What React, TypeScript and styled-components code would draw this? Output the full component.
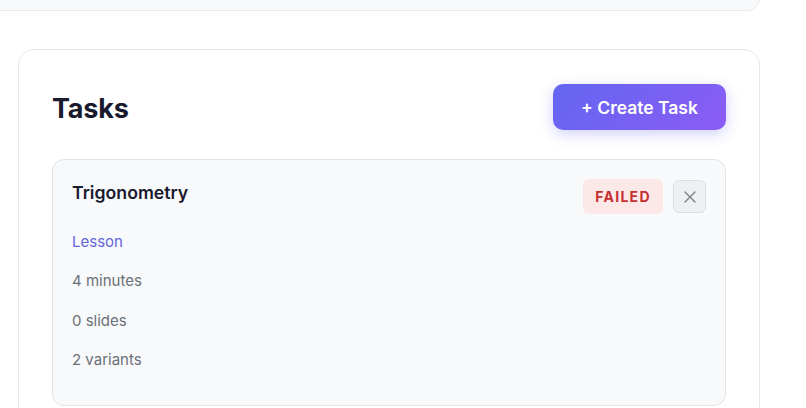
import React from "react";
import styled, { createGlobalStyle } from "styled-components";

const Global = createGlobalStyle`
  html, body { margin: 0; padding: 0; background: #ffffff; overflow: hidden; }
  body { font-family: Inter, "Noto Sans", sans-serif; -webkit-font-smoothing: antialiased; }
  * { box-sizing: border-box; }
`;

const Page = styled.div`
  display: flex;
  flex-direction: column;
  width: 742px;
  margin-left: 18px;
`;

const PrevCard = styled.div`
  height: 51px;
  margin-top: -40px;
  margin-left: -60px;
  background: #f8f9fb;
  border: 1px solid #e8e9ec;
  border-radius: 12px;
`;

const Card = styled.section`
  margin-top: 38px;
  background: #ffffff;
  border: 1px solid #e6e7ea;
  border-radius: 16px;
  padding: 34px 33px 40px 33px;
`;

const Header = styled.div`
  display: flex;
  align-items: center;
  justify-content: space-between;
  margin-bottom: 29px;
`;

const Title = styled.h2`
  margin: 0;
  font-size: 27px;
  font-weight: 700;
  color: #1a1a2e;
  letter-spacing: -0.2px;
  padding-top: 2px;
`;

const PrimaryButton = styled.button`
  height: 46px;
  width: 173px;
  border: none;
  border-radius: 10px;
  background: linear-gradient(135deg, #6366f1 0%, #8b5cf6 100%);
  color: #ffffff;
  font-family: Inter, sans-serif;
  font-size: 17.5px;
  font-weight: 600;
  padding-top: 1px;
  box-shadow: 0 4px 14px rgba(99, 102, 241, 0.3);
  cursor: pointer;
`;

const TaskCard = styled.div`
  background: #f8f9fb;
  border: 1px solid #e3e4e8;
  border-radius: 12px;
  padding: 20px 19px 33px 19px;
`;

const TaskTop = styled.div`
  display: flex;
  align-items: flex-start;
  justify-content: space-between;
`;

const TaskName = styled.h3`
  margin: 0;
  font-size: 17.7px;
  line-height: 25px;
  font-weight: 600;
  color: #1a1a2e;
`;

const Actions = styled.div`
  display: flex;
  align-items: center;
  gap: 10px;
  margin-top: -1px;
`;

const Badge = styled.span<{ $tone: "danger" }>`
  display: inline-flex;
  align-items: center;
  justify-content: center;
  width: 80px;
  height: 35px;
  border-radius: 6px;
  background: #fde8e8;
  color: #c53030;
  font-size: 14px;
  font-weight: 700;
  letter-spacing: 1.3px;
`;

const IconButton = styled.button`
  display: inline-flex;
  align-items: center;
  justify-content: center;
  width: 33px;
  height: 33px;
  padding: 0;
  border: 1px solid #dcdee3;
  border-radius: 6px;
  background: #eff0f2;
  color: #7b7f88;
  cursor: pointer;
`;

const Meta = styled.div`
  display: flex;
  flex-direction: column;
  gap: 15.3px;
  margin-top: 16px;
`;

const MetaLine = styled.div<{ $accent?: boolean }>`
  font-size: 15px;
  line-height: 24px;
  color: ${(p) => (p.$accent ? "#6466dc" : "#6b7078")};
`;

export default function App() {
  return (
    <>
      <Global />
      <Page>
        <PrevCard />
        <Card>
          <Header>
            <Title>Tasks</Title>
            <PrimaryButton>+ Create Task</PrimaryButton>
          </Header>
          <TaskCard>
            <TaskTop>
              <TaskName>Trigonometry</TaskName>
              <Actions>
                <Badge $tone="danger">FAILED</Badge>
                <IconButton aria-label="Remove">
                  <svg width="14" height="14" viewBox="0 0 14 14" fill="none">
                    <path d="M2 2L12 12M12 2L2 12" stroke="currentColor" strokeWidth="1.4" strokeLinecap="round" />
                  </svg>
                </IconButton>
              </Actions>
            </TaskTop>
            <Meta>
              <MetaLine $accent>Lesson</MetaLine>
              <MetaLine>4 minutes</MetaLine>
              <MetaLine>0 slides</MetaLine>
              <MetaLine>2 variants</MetaLine>
            </Meta>
          </TaskCard>
        </Card>
      </Page>
    </>
  );
}
